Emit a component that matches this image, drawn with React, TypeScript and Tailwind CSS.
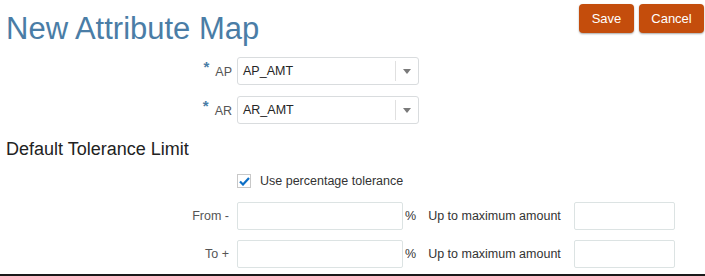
import React from 'react';

function Select({ value }: { value: string }) {
  return (
    <div className="flex h-[28px] w-[182px] items-center rounded-[3px] border border-[#d9dcde] bg-white">
      <span className="flex-1 pl-[5px] text-[12.5px] text-[#252525]">{value}</span>
      <span className="h-[20px] w-px bg-[#e0e0e0]" />
      <span className="flex w-[22px] justify-center">
        <svg width="8" height="5" viewBox="0 0 8 5">
          <path d="M0 0h8L4 5z" fill="#7a7a7a" />
        </svg>
      </span>
    </div>
  );
}

function RangeRow({ label }: { label: string }) {
  return (
    <div className="flex h-[28px] items-center">
      <span className="w-[230px] pr-[1px] text-right text-[12.5px] text-[#555]">{label}</span>
      <div className="ml-[7px] h-[28px] w-[166px] rounded-[2px] border border-[#dce3e3] bg-white" />
      <span className="ml-[2px] text-[12.5px] text-[#333]">%</span>
      <span className="ml-[12px] text-[12.5px] text-[#333]">Up to maximum amount</span>
      <div className="ml-[13px] h-[28px] w-[101px] rounded-[2px] border border-[#dce3e3] bg-white" />
    </div>
  );
}

export default function App() {
  return (
    <div
      className="flex h-[276px] w-[705px] flex-col bg-white"
      style={{ fontFamily: '"Liberation Sans", Arial, sans-serif' }}
    >
      {/* header */}
      <div className="flex justify-between">
        <h1 className="ml-[6px] mt-[11px] text-[31px] leading-[35px] text-[#4a7da6]">New Attribute Map</h1>
        <div className="mr-[1px] mt-[4px] flex gap-[5px]">
          <button className="h-[29px] w-[55px] rounded-[4px] bg-[#c44d0c] text-[13px] text-white shadow-[0_1px_2px_rgba(0,0,0,0.35)]">
            Save
          </button>
          <button className="h-[29px] w-[65px] rounded-[4px] bg-[#c44d0c] text-[13px] text-white shadow-[0_1px_2px_rgba(0,0,0,0.35)]">
            Cancel
          </button>
        </div>
      </div>

      {/* mapping */}
      <div className="mt-[11px] flex flex-col gap-[11px]">
        {['AP', 'AR'].map((k) => (
          <div key={k} className="flex h-[28px] items-center">
            <span className="flex w-[232px] items-start justify-end text-[12.5px] text-[#555]">
              <span className="mr-[6px] -mt-[5px] text-[15px] font-bold text-[#4a7da6]">*</span>
              <span className="mt-[2px]">{k}</span>
            </span>
            <div className="ml-[5px]">
              <Select value={`${k}_AMT`} />
            </div>
          </div>
        ))}
      </div>

      <h2 className="ml-[6px] mt-[15px] text-[18px] leading-[20px] text-[#222]">Default Tolerance Limit</h2>

      <div className="ml-[237px] mt-[14px] flex h-[16px] items-center">
        <span className="flex h-[14px] w-[14px] items-center justify-center border border-[#c8c8c8] bg-white">
          <svg width="11" height="9" viewBox="0 0 11 9">
            <path d="M1 4.5l3 3L10 1" fill="none" stroke="#0d6fc6" strokeWidth="2.2" />
          </svg>
        </span>
        <span className="ml-[9px] text-[12.5px] text-[#333]">Use percentage tolerance</span>
      </div>

      <div className="mt-[13px] flex flex-col gap-[10px]">
        <RangeRow label="From -" />
        <RangeRow label="To +" />
      </div>

      <div className="mt-auto h-[2px] w-full bg-[#1a1a1a]" />
    </div>
  );
}
